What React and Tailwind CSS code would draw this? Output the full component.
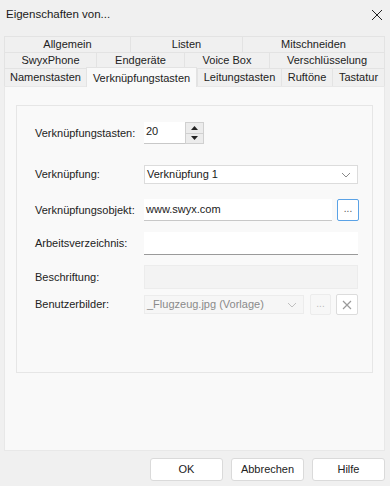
import React from "react";

const font = { fontFamily: '"Liberation Sans", Arial, sans-serif' };

const tabRows = [
  [
    ["Allgemein", 126],
    ["Listen", 112],
    ["Mitschneiden", 143],
  ],
  [
    ["SwyxPhone", 92],
    ["Endgeräte", 88],
    ["Voice Box", 85],
    ["Verschlüsselung", 116],
  ],
];

const lastRow = [
  ["Namenstasten", 82],
  ["Verknüpfungstasten", 111],
  ["Leitungstasten", 84],
  ["Ruftöne", 51],
  ["Tastatur", 53],
];

function Chevron({ color = "#8a8a8a" }) {
  return (
    <svg width="10" height="6" viewBox="0 0 10 6" className="shrink-0">
      <path d="M1 1 L5 5 L9 1" fill="none" stroke={color} strokeWidth="1" />
    </svg>
  );
}

function Row({ label, mt, children }) {
  return (
    <div className={`flex items-center ${mt}`}>
      <div className="w-[109px] shrink-0 text-[11px] text-[#222]">{label}</div>
      {children}
    </div>
  );
}

export default function App() {
  return (
    <div
      className="w-[390px] h-[486px] bg-[#f0f0f0] flex flex-col overflow-hidden text-[#1a1a1a]"
      style={font}
    >
      {/* title bar */}
      <div className="h-[30px] flex items-center justify-between pl-[6px] pr-[7px]">
        <span className="text-[11.5px]">Eigenschaften von...</span>
        <svg width="12" height="12" viewBox="0 0 12 12">
          <path d="M1 1 L11 11 M11 1 L1 11" stroke="#222" strokeWidth="1" />
        </svg>
      </div>

      {/* tabs */}
      <div className="mt-[6px] ml-[4px] w-[381px] flex flex-col">
        {tabRows.map((row, i) => (
          <div key={i} className="flex h-[16px]">
            {row.map(([name, w]) => (
              <div
                key={name}
                style={{ width: w }}
                className="flex items-center justify-center border-l border-t border-[#e3e3e3] last:border-r text-[11px] text-[#222] bg-[#f0f0f0]"
              >
                {name}
              </div>
            ))}
          </div>
        ))}
        <div className="flex h-[18px] items-end">
          {lastRow.map(([name, w]) =>
            name === "Verknüpfungstasten" ? (
              <div
                key={name}
                style={{ width: w }}
                className="h-[20px] -mt-[2px] flex items-start justify-center pt-[2px] border-l border-r border-t border-[#e3e3e3] bg-[#f9f9f9] text-[11px] text-[#222] relative z-10 -mb-px"
              >
                {name}
              </div>
            ) : (
              <div
                key={name}
                style={{ width: w }}
                className="h-[18px] flex items-center justify-center border-l border-t border-[#e3e3e3] last:border-r text-[11px] text-[#222] bg-[#f0f0f0]"
              >
                {name}
              </div>
            )
          )}
        </div>
      </div>

      {/* tab page */}
      <div className="ml-[4px] w-[381px] h-[365px] bg-[#f9f9f9] border border-[#e8e8e8] pt-[18px] px-[11px]">
        <div className="h-[268px] border border-[#e6e6e6] pl-[18px] pt-[16px]">
          <Row label="Verknüpfungstasten:" mt="mt-0">
            <div className="flex">
              <div className="w-[41px] h-[22px] bg-white border-b border-[#c8c8c8] pl-[2px] pt-[1px] text-[11px]">
                20
              </div>
              <div className="flex flex-col w-[19px] h-[22px] border border-[#d0d0d0] bg-[#ececec]">
                <div className="flex-1 flex items-center justify-center border-b border-[#d0d0d0]">
                  <svg width="7" height="4" viewBox="0 0 7 4">
                    <path d="M0 4 L3.5 0 L7 4 Z" fill="#222" />
                  </svg>
                </div>
                <div className="flex-1 flex items-center justify-center">
                  <svg width="7" height="4" viewBox="0 0 7 4">
                    <path d="M0 0 L3.5 4 L7 0 Z" fill="#222" />
                  </svg>
                </div>
              </div>
            </div>
          </Row>

          <Row label="Verknüpfung:" mt="mt-[21px]">
            <div className="w-[214px] h-[19px] bg-white border border-[#dcdcdc] flex items-center justify-between pl-[2px] pr-[6px] text-[11px]">
              <span>Verknüpfung 1</span>
              <Chevron />
            </div>
          </Row>

          <Row label="Verknüpfungsobjekt:" mt="mt-[15px]">
            <div className="w-[188px] h-[22px] bg-white border-b border-[#c8c8c8] pl-[2px] flex items-center text-[11px]">
              www.swyx.com
            </div>
            <div className="ml-[5px] w-[22px] h-[22px] bg-white border border-[#5aa2e6] rounded-[2px] flex items-center justify-center text-[10px] text-[#555] pb-[3px]">
              ...
            </div>
          </Row>

          <Row label="Arbeitsverzeichnis:" mt="mt-[11px]">
            <div className="w-[214px] h-[23px] bg-white border-b border-[#9a9a9a]" />
          </Row>

          <Row label="Beschriftung:" mt="mt-[10px]">
            <div className="w-[214px] h-[24px] bg-[#f3f3f3] border border-[#ececec]" />
          </Row>

          <Row label="Benutzerbilder:" mt="mt-[5px]">
            <div className="w-[160px] h-[19px] bg-[#f6f6f6] border border-[#ececec] flex items-center justify-between pl-[2px] pr-[6px] text-[11px] text-[#8a8a8a]">
              <span>_Flugzeug.jpg (Vorlage)</span>
              <Chevron color="#c0c0c0" />
            </div>
            <div className="ml-[6px] w-[21px] h-[21px] bg-[#f7f7f7] border border-[#ececec] rounded-[2px] flex items-center justify-center text-[10px] text-[#bbb] pb-[3px]">
              ...
            </div>
            <div className="ml-[5px] w-[22px] h-[21px] bg-white border border-[#dcdcdc] rounded-[2px] flex items-center justify-center">
              <svg width="10" height="10" viewBox="0 0 10 10">
                <path d="M1 1 L9 9 M9 1 L1 9" stroke="#9a9a9a" strokeWidth="1.2" />
              </svg>
            </div>
          </Row>
        </div>
      </div>

      {/* buttons */}
      <div className="flex justify-end gap-[8px] pr-[5px] mt-[7px]">
        {["OK", "Abbrechen", "Hilfe"].map((b) => (
          <div
            key={b}
            className="w-[73px] h-[23px] bg-white border border-[#dadada] rounded-[3px] flex items-center justify-center text-[11px] text-[#222]"
          >
            {b}
          </div>
        ))}
      </div>
    </div>
  );
}
